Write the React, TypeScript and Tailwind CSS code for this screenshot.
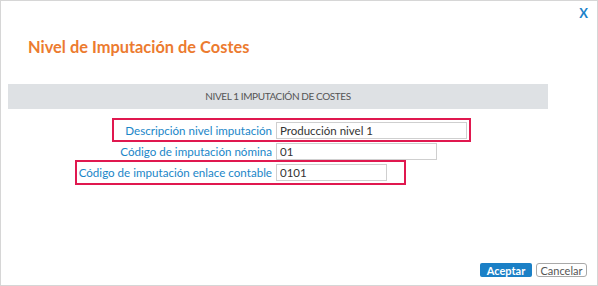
import React from 'react';

const rows = [
  { label: 'Descripción nivel imputación', value: 'Producción nivel 1', width: 'w-[191px]' },
  { label: 'Código de imputación nómina', value: '01', width: 'w-[161px]' },
  { label: 'Código de imputación enlace contable', value: '0101', width: 'w-[111px]' },
];

export default function App() {
  return (
    <div className="relative w-[598px] h-[286px] bg-white border border-[#d6d6d6] font-['Lato','Open_Sans',sans-serif] overflow-hidden">
      {/* Close */}
      <button className="absolute top-[6px] right-[9px] text-[13px] font-bold text-[#1b82c9] leading-none">X</button>

      {/* Title */}
      <h1 className="mt-[36px] ml-[27px] text-[16.4px] font-bold text-[#ec7b2f] leading-[20px]">
        Nivel de Imputación de Costes
      </h1>

      {/* Section bar */}
      <div className="mt-[27px] ml-[7px] w-[540px] h-[25px] bg-[#dee1e4] flex items-center justify-center text-[10px] text-[#555] tracking-[-0.4px]">
        NIVEL 1 IMPUTACIÓN DE COSTES
      </div>

      {/* Form */}
      <div className="relative mt-[13px] flex flex-col gap-[4px]">
        {rows.map((r) => (
          <div key={r.label} className="flex items-center h-[17px]">
            <label className="w-[271px] text-right text-[11.6px] text-[#1a86c8] whitespace-nowrap">{r.label}</label>
            <input
              readOnly
              value={r.value}
              className={`ml-[4px] h-[17px] ${r.width} border border-[#cfcfcf] px-[3px] text-[11.5px] text-[#333] outline-none`}
            />
          </div>
        ))}
        {/* Highlight boxes */}
        <div className="absolute left-[111px] top-[-4px] w-[359px] h-[24px] border-2 border-[#e0184f] pointer-events-none" />
        <div className="absolute left-[74px] top-[38px] w-[331px] h-[25px] border-2 border-[#e0184f] pointer-events-none" />
      </div>

      {/* Footer buttons */}
      <div className="absolute right-[10px] bottom-[8px] flex gap-[4px]">
        <button className="h-[14px] w-[52px] bg-[#1b80c6] text-white text-[11px] font-bold leading-none rounded-[2px]">
          Aceptar
        </button>
        <button className="h-[14px] w-[51px] border border-[#a9a9a9] text-[#555] text-[11px] leading-none rounded-[3px] bg-white">
          Cancelar
        </button>
      </div>
    </div>
  );
}
